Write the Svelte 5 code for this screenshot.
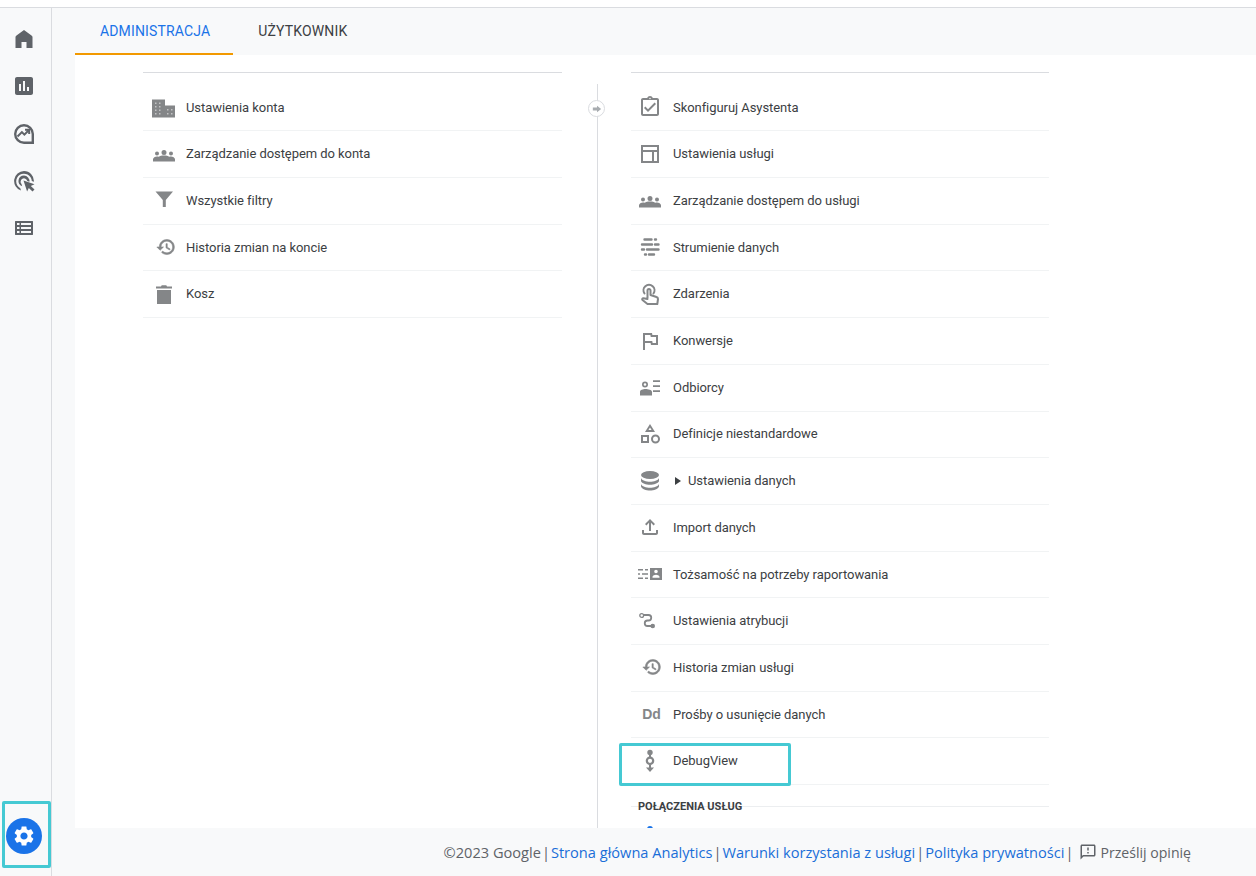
<script>
  const g = '<g transform="translate(0 1.500)"><path d="M12 11.400a2.500 2.500 0 1 0 0-5 2.500 2.500 0 0 0 0 5zM5 12a2 2 0 1 0 0-4 2 2 0 0 0 0 4zm14 0a2 2 0 1 0 0-4 2 2 0 0 0 0 4zM1 18v-2.200c0-1.600 2.200-2.800 4-2.800.6 0 1.200.1 1.800.3C7.600 12.500 10 12 12 12s4.400.5 5.200 1.300c.6-.2 1.200-.3 1.800-.3 1.800 0 4 1.200 4 2.800V18H1z"/></g>';
  const history = '<path stroke="#848688" stroke-width=".7" d="M13 3c-4.970 0-9 4.030-9 9H1l3.890 3.890.07.14L9 12H6c0-3.870 3.130-7 7-7s7 3.130 7 7-3.130 7-7 7c-1.930 0-3.680-.79-4.940-2.060l-1.420 1.420C8.270 19.990 10.510 21 13 21c4.970 0 9-4.030 9-9s-4.030-9-9-9zm-1 5v5l4.280 2.540.72-1.210-3.500-2.080V8H12z"/>';
  const line = 'fill="none" stroke="#848688" stroke-linecap="round"';

  const icons = {
    domain: '<path d="M0 4.500h13v6h10v12H0z"/><path fill="#fff" fill-opacity=".5" d="M3 7.500h1.500V9H3zM7 7.500h1.500V9H7zM3 11h1.500v1.500H3zM7 11h1.500v1.500H7zM3 14.500h1.500V16H3zM7 14.500h1.500V16H7zM3 18h1.500v1.500H3zM7 18h1.500v1.500H7zM15 14h1.500v1.500H15zM19 14h1.500v1.500H19zM15 18h1.500v1.500H15zM19 18h1.500v1.500H19z"/>',
    group: g,
    filter: '<path d="M3.500 3.500H21L13.800 12v7h-3v-7z"/>',
    history,
    trash: '<path d="M5 8h14v14H5zM4 4.500h5l.7-1.200h4.600l.7 1.200h5v2H4z"/>',
    assistant: '<path d="M18 9l-1.410-1.420L10 14.170l-2.590-2.580L6 13l4 4zm1-6h-4.180C14.400 1.840 13.300 1 12 1c-1.300 0-2.400.84-2.820 2H5c-1.100 0-2 .9-2 2v14c0 1.100.9 2 2 2h14c1.100 0 2-.9 2-2V5c0-1.100-.9-2-2-2zm-7-.25c.41 0 .75.34.75.75s-.34.75-.75.75-.75-.34-.75-.75.34-.75.75-.75zM19 19H5V5h14v14z"/>',
    layout: '<path d="M3 3v18h18V3H3zm2 2h14v3H5V5zm0 5h9v9H5v-9zm11 0h3v9h-3v-9z"/>',
    streams: `<path ${line} stroke-width="2.400" d="M6.500 4.500h7M17 4.500h1M4 9.500h10M17 9.500h3.500M4 14.500h2M9 14.500h11.500M7 19.500h1M11 19.500h5"/>`,
    touch: `<path ${line} stroke-width="2" d="M6.500 11.500a5.500 5.500 0 1 1 9 0"/><path ${line} stroke-width="2" stroke-linejoin="round" d="M9.500 16V8.500a1.500 1.500 0 0 1 3 0V13l6 2c1 .3 1.500 1 1.500 2l-.7 5H9.500l-5-4c-.8-.8 0-2 1-1.800l4 .8"/>`,
    flag: '<path d="M12.360 6l.4 2H18v6h-3.360l-.4-2H7V6h5.360M14 4H5v17h2v-7h5.600l.4 2h7V6h-5.600L14 4z"/>',
    audience: '<path d="M7 6.500a3 3 0 1 0 0 6 3 3 0 0 0 0-6zm0 1.700a1.300 1.300 0 1 1 0 2.600 1.300 1.300 0 0 1 0-2.600zM7.500 14c-2.500 0-5.500 1-5.500 2.800v3.700h12v-3.700c0-1.800-4-2.800-6.500-2.800zM15 5.300h7v1.800h-7zM15 10.300h7v1.800h-7zM15 15.300h7v1.800h-7z"/>',
    shapes: '<path d="M12 2l5 8H7l5-8zm0 3.400L10.400 8h3.200L12 5.400zM3 13h8v8H3v-8zm2 2v4h4v-4H5zM17.500 12.500a4.500 4.500 0 1 1 0 9 4.500 4.500 0 0 1 0-9zm0 2a2.500 2.500 0 1 0 0 5 2.500 2.500 0 0 0 0-5z"/>',
    data: '<ellipse cx="12" cy="6" rx="9" ry="4"/><path d="M3 9c1 2.500 5 3.700 9 3.700S20 11.500 21 9v3.200c-1 2.300-5 3.500-9 3.500s-8-1.200-9-3.500zM3 15c1 2.500 5 3.700 9 3.700s8-1.200 9-3.700v2.500c-1 2.700-5 4-9 4s-8-1.300-9-4z"/>',
    upload: '<path d="M18 15v3H6v-3H4v3c0 1.100.9 2 2 2h12c1.100 0 2-.9 2-2v-3h-2zM7 9l1.410 1.410L11 7.830V16h2V7.830l2.590 2.580L17 9l-5-5-5 5z"/>',
    identity: '<path d="M0 7h5v1.500H0zM7 7h3v1.500H7zM0 11.200h2v1.500H0zM4 11.200h6v1.500H4zM0 15.500h5V17H0zM7 15.500h3V17H7zM12 6h12v12H12zm4.200 3.500a1.800 1.800 0 1 0 3.600 0 1.800 1.800 0 0 0-3.600 0zM14.500 15.800h7v-1c0-1.300-2.300-2-3.500-2s-3.500.7-3.500 2z"/>',
    attribution: `<circle cx="3.700" cy="6.500" r="1.900" fill="none" stroke="#848688" stroke-width="1.300"/><path ${line} stroke-width="1.800" d="M6 6h4.500a2.700 2.700 0 0 1 0 5.500h-1a2.700 2.700 0 0 0 0 5.500H13"/><circle cx="14.700" cy="17" r="2.300"/>`,
    debug: '<circle cx="12" cy="3.500" r="2.700"/><rect x="11" y="5" width="2" height="3"/><path d="M12 7.500a4.300 4.300 0 1 1 0 8.600 4.300 4.300 0 0 1 0-8.600zm0 2.200a2.100 2.100 0 1 0 0 4.200 2.100 2.100 0 0 0 0-4.200z"/><rect x="11" y="15.500" width="2" height="4"/><path d="M8 18.500h8L12 23z"/>'
  };

  const nav = [
    { label: 'Strona główna', d: '<path d="M12 3l7.500 5.500q1 .7 1 1.500v11h-6v-6h-5v6h-6V10q0-.8 1-1.500z"/>' },
    { label: 'Raporty', d: '<path d="M19 3H5c-1.100 0-2 .9-2 2v14c0 1.100.9 2 2 2h14c1.100 0 2-.9 2-2V5c0-1.100-.9-2-2-2zM9 17H7v-7h2v7zm4 0h-2V7h2v10zm4 0h-2v-4h2v4z"/>' },
    { label: 'Eksploruj', d: '<path fill-rule="evenodd" d="M12 2a10 10 0 1 0 0 20h10V12A10 10 0 0 0 12 2zm0 2.400a7.600 7.600 0 0 1 7.600 7.600v7.600H12a7.600 7.600 0 0 1 0-15.200z"/><path d="M6.200 15.300l3.700-3.700 2.500 2.500 3.800-3.800V12h2V6.800h-5.200v2h1.800l-2.400 2.400-2.500-2.500-5.100 5.100z"/>' },
    { label: 'Reklamy', d: '<path d="M12 2a10 10 0 0 0-3 19.500l-.7-2.200A7.800 7.800 0 1 1 19.800 12l2.100.7A10 10 0 0 0 12 2z"/><path d="M12 6.500a5.500 5.500 0 0 0-1.800 10.700l-.7-2.100a3.400 3.400 0 1 1 5.800-3.100l2.100.7A5.500 5.500 0 0 0 12 6.500z"/><path d="M11.500 11.500l11 3.700-3.700 1.700 3.700 3.700-2 2-3.700-3.700-1.700 3.700z"/>' },
    { label: 'Konfiguruj', d: '<path fill-rule="evenodd" d="M3.500 5h17c.3 0 .5.2.5.5v13c0 .3-.2.5-.5.5h-17c-.3 0-.5-.2-.5-.5v-13c0-.3.2-.5.5-.5zM5 7v2h2.500V7zm4 0v2h10V7zm-4 4v2h2.500v-2zm4 0v2h10v-2zm-4 4v2h2.500v-2zm4 0v2h10v-2z"/>' }
  ];

  const accountRows = [
    { text: 'Ustawienia konta', icon: 'domain' },
    { text: 'Zarządzanie dostępem do konta', icon: 'group' },
    { text: 'Wszystkie filtry', icon: 'filter' },
    { text: 'Historia zmian na koncie', icon: 'history' },
    { text: 'Kosz', icon: 'trash' }
  ];

  const propertyRows = [
    { text: 'Skonfiguruj Asystenta', icon: 'assistant' },
    { text: 'Ustawienia usługi', icon: 'layout' },
    { text: 'Zarządzanie dostępem do usługi', icon: 'group' },
    { text: 'Strumienie danych', icon: 'streams' },
    { text: 'Zdarzenia', icon: 'touch' },
    { text: 'Konwersje', icon: 'flag' },
    { text: 'Odbiorcy', icon: 'audience' },
    { text: 'Definicje niestandardowe', icon: 'shapes' },
    { text: 'Ustawienia danych', icon: 'data', expand: true },
    { text: 'Import danych', icon: 'upload' },
    { text: 'Tożsamość na potrzeby raportowania', icon: 'identity' },
    { text: 'Ustawienia atrybucji', icon: 'attribution' },
    { text: 'Historia zmian usługi', icon: 'history' },
    { text: 'Prośby o usunięcie danych', dd: true },
    { text: 'DebugView', icon: 'debug' }
  ];
</script>

{#snippet row(item)}
  <li class="row">
    <span class="icon">
      {#if item.dd}
        <span class="dd">Dd</span>
      {:else}
        <svg class:small={item.icon === 'history'} viewBox="0 0 24 24" width="24" height="24">{@html icons[item.icon]}</svg>
      {/if}
    </span>
    {#if item.expand}<span class="caret"></span>{/if}
    <span>{item.text}</span>
  </li>
{/snippet}

<div class="page">
  <div class="body">
    <nav class="rail">
      {#each nav as item}
        <button class="rail-btn" title={item.label}>
          <svg viewBox="0 0 24 24" width="24" height="24">{@html item.d}</svg>
        </button>
      {/each}
      <button class="gear" title="Administracja">
        <svg viewBox="0 0 24 24" width="24" height="24"><path d="M19.140 12.940c.04-.3.06-.61.06-.94 0-.32-.02-.64-.07-.94l2.030-1.580c.18-.14.23-.41.12-.61l-1.920-3.320c-.12-.22-.37-.29-.59-.22l-2.390.96c-.5-.38-1.030-.7-1.620-.94l-.36-2.540c-.04-.24-.24-.41-.48-.41h-3.840c-.24 0-.43.17-.47.41l-.36 2.540c-.59.24-1.130.57-1.620.94l-2.390-.96c-.22-.08-.47 0-.59.22L2.740 8.870c-.12.21-.08.47.12.61l2.030 1.580c-.05.3-.09.63-.09.94s.02.64.07.94l-2.030 1.580c-.18.14-.23.41-.12.61l1.920 3.320c.12.22.37.29.59.22l2.390-.96c.5.38 1.030.7 1.620.94l.36 2.540c.05.24.24.41.48.41h3.840c.24 0 .44-.17.47-.41l.36-2.540c.59-.24 1.130-.56 1.620-.94l2.390.96c.22.08.47 0 .59-.22l1.920-3.320c.12-.22.07-.47-.12-.61l-2.010-1.580zM12 15.600c-1.980 0-3.600-1.620-3.600-3.600s1.620-3.600 3.600-3.600 3.600 1.620 3.600 3.600-1.620 3.600-3.600 3.600z"/></svg>
      </button>
    </nav>

    <div class="main">
      <div class="tabs">
        <div class="tab active">ADMINISTRACJA</div>
        <div class="tab">UŻYTKOWNIK</div>
      </div>

      <div class="content">
        <section class="col account">
          <ul>
            {#each accountRows as item}
              {@render row(item)}
            {/each}
          </ul>
        </section>

        <div class="stepper">
          <span class="step">
            <svg viewBox="0 0 12 12" width="10" height="10"><path d="M1 4.300h5V2l5 4-5 4V7.700H1z"/></svg>
          </span>
        </div>

        <section class="col property">
          <ul>
            {#each propertyRows as item}
              {@render row(item)}
            {/each}
          </ul>
          <h3>Połączenia usług</h3>
          <span class="peek"></span>
        </section>
      </div>

      <footer>
        <span>©2023 Google</span><i>|</i>
        <a href="#a">Strona główna Analytics</a><i>|</i>
        <a href="#b">Warunki korzystania z usługi</a><i>|</i>
        <a href="#c">Polityka prywatności</a><i>|</i>
        <svg viewBox="0 0 24 24" width="18" height="18"><path d="M20 2H4c-1.100 0-2 .9-2 2v18l4-4h14c1.100 0 2-.9 2-2V4c0-1.100-.9-2-2-2zm0 14H5.170L4 17.170V4h16v12zM11 12h2v2h-2zm0-6h2v4h-2z"/></svg>
        <span class="send">Prześlij opinię</span>
      </footer>
    </div>
  </div>

  <div class="mark mark-debug"></div>
  <div class="mark mark-gear"></div>
</div>

<style>
  :global(body) {
    margin: 0;
    background: #fff;
    font-family: Roboto, "Liberation Sans", sans-serif;
  }

  .page {
    position: relative;
    height: 876px;
    padding-top: 7px;
    box-sizing: border-box;
    overflow: hidden;
    color: #3c4043;
  }

  .body {
    display: flex;
    height: 100%;
    border-top: 1px solid #dadce0;
    box-sizing: border-box;
    background: #f8f9fa;
  }

  .rail {
    width: 52px;
    flex: none;
    box-sizing: border-box;
    border-right: 1px solid #dadce0;
    display: flex;
    flex-direction: column;
    align-items: center;
    padding-top: 8.800px;
    gap: 3.400px;
  }

  .rail-btn,
  .gear {
    border: 0;
    padding: 0;
    background: none;
    display: flex;
    align-items: center;
    justify-content: center;
  }

  .rail-btn {
    width: 44px;
    height: 44px;
    margin-right: 3px;
  }

  .rail-btn svg {
    fill: #5f6368;
  }

  .gear {
    width: 36px;
    height: 36px;
    margin-top: auto;
    margin-bottom: 22px;
    margin-right: 3px;
    border-radius: 50%;
    background: #1a73e8;
  }

  .gear svg {
    fill: #fff;
  }

  .main {
    flex: 1;
    min-width: 0;
    display: flex;
    flex-direction: column;
    padding-left: 23px;
  }

  .tabs {
    height: 47px;
    flex: none;
    display: flex;
  }

  .tab {
    height: 45px;
    line-height: 46px;
    padding: 0 25px;
    font-size: 14px;
    letter-spacing: 0.15px;
    color: #3c4043;
  }

  .tab.active {
    padding: 0 23px 0 25px;
    color: #1a73e8;
    border-bottom: 2px solid #f29900;
  }

  .content {
    flex: 1;
    min-height: 0;
    overflow: hidden;
    background: #fff;
    display: flex;
    padding-left: 68px;
  }

  .col {
    width: 419px;
    flex: none;
    padding-top: 17px;
    box-sizing: border-box;
  }

  .property {
    width: 418px;
  }

  .col ul {
    list-style: none;
    margin: 0;
    padding: 11.600px 0 0;
    border-top: 1px solid #dadce0;
  }

  .row {
    height: 46.710px;
    box-sizing: border-box;
    display: flex;
    align-items: center;
    padding-bottom: 0.800px;
    border-bottom: 1px solid #f1f3f4;
    font-size: 13px;
    letter-spacing: -0.06px;
    color: #3c4043;
  }

  .account .row {
    padding-left: 9px;
  }

  .property .row {
    padding-left: 7px;
  }

  .icon {
    width: 24px;
    height: 24px;
    margin-right: 10px;
    flex: none;
    display: flex;
    align-items: center;
    justify-content: center;
  }

  .property .icon {
    margin-right: 11px;
  }

  .icon svg {
    flex: none;
    fill: #848688;
  }

  .icon svg.small {
    width: 20px;
    height: 20px;
    margin-left: 3px;
  }

  .dd {
    margin-left: 3px;
    font-family: "Liberation Sans", sans-serif;
    font-weight: 700;
    font-size: 14px;
    letter-spacing: 0;
    color: #848688;
  }

  .caret {
    width: 0;
    height: 0;
    margin: 0 7px 0 2px;
    border-left: 6px solid #3c4043;
    border-top: 4.500px solid transparent;
    border-bottom: 4.500px solid transparent;
  }

  .stepper {
    width: 69px;
    flex: none;
    position: relative;
    display: flex;
    justify-content: center;
    padding-top: 29px;
    box-sizing: border-box;
  }

  .stepper::before {
    content: "";
    position: absolute;
    left: 35px;
    top: 29px;
    bottom: 0;
    width: 1px;
    background: #dadce0;
  }

  .step {
    position: relative;
    width: 15px;
    height: 15px;
    margin-top: 16px;
    border: 1px solid #dadce0;
    border-radius: 50%;
    background: #fff;
    display: flex;
    align-items: center;
    justify-content: center;
  }

  .step svg {
    fill: #a8acb0;
  }

  h3 {
    height: 8px;
    margin: 13px 0 0;
    padding-left: 7px;
    font-size: 11px;
    line-height: 18px;
    font-weight: 700;
    text-transform: uppercase;
    color: #3c4043;
    border-bottom: 1px solid #eceef0;
  }

  .peek {
    display: block;
    width: 6px;
    height: 6px;
    margin: 19px 0 0 16px;
    border-radius: 50%;
    background: #1a73e8;
  }

  footer {
    height: 48px;
    flex: none;
    display: flex;
    align-items: center;
    justify-content: flex-end;
    padding-right: 65px;
    font-family: "Open Sans", sans-serif;
    font-size: 14.600px;
    color: #5f6368;
  }

  footer a {
    color: #1a6ed8;
    text-decoration: none;
  }

  footer i {
    font-style: normal;
    margin: 0 1px;
  }

  footer svg {
    fill: #5f6368;
    margin: 0 3px 0 5px;
  }

  .send {
    font-size: 14.100px;
  }

  .mark {
    position: absolute;
    box-sizing: border-box;
    border: 3px solid #45c9d3;
    border-radius: 2px;
  }

  .mark-debug {
    left: 619px;
    top: 743px;
    width: 172px;
    height: 43px;
  }

  .mark-gear {
    left: 2px;
    top: 801px;
    width: 49px;
    height: 67px;
  }
</style>
